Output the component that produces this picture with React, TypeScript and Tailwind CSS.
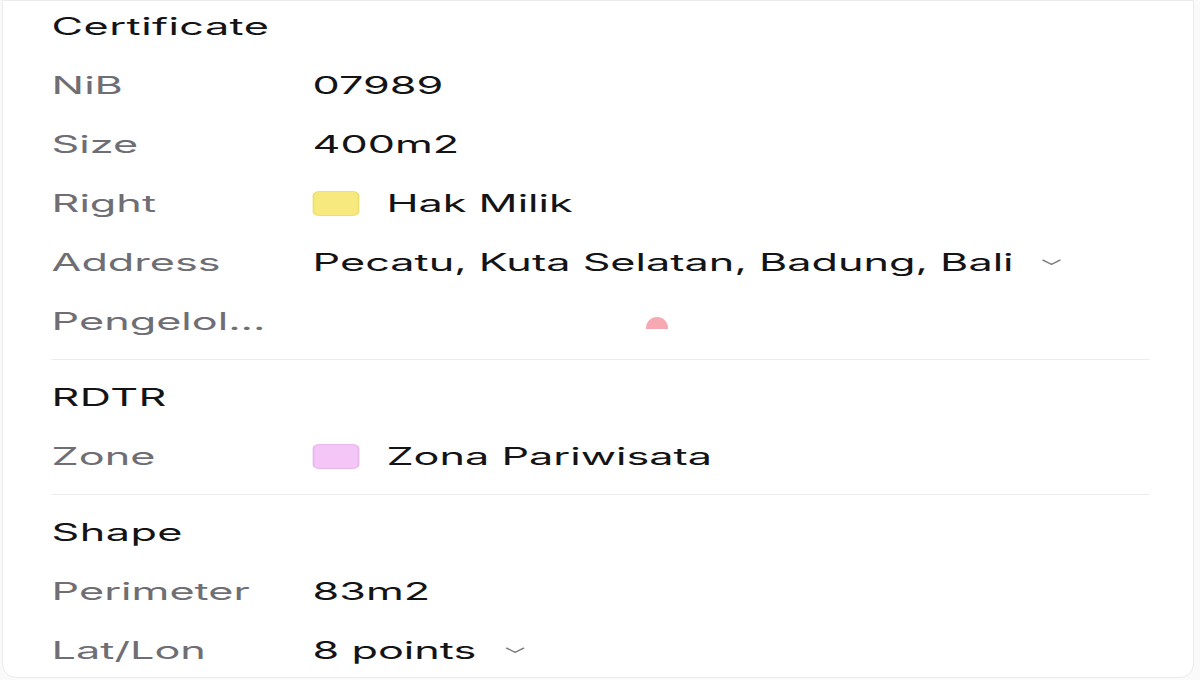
import React from 'react';

type Row = {
  label: string;
  value?: string;
  swatch?: string;
  expandable?: boolean;
};

type Section = {
  title: string;
  rows: Row[];
};

const sections: Section[] = [
  {
    title: 'Certificate',
    rows: [
      { label: 'NiB', value: '07989' },
      { label: 'Size', value: '400m2' },
      { label: 'Right', value: 'Hak Milik', swatch: 'bg-[#f7e97e] border-[#ece071]' },
      { label: 'Address', value: 'Pecatu, Kuta Selatan, Badung, Bali', expandable: true },
      { label: 'Pengelol...' },
    ],
  },
  {
    title: 'RDTR',
    rows: [{ label: 'Zone', value: 'Zona Pariwisata', swatch: 'bg-[#f3c6f7] border-[#e8b9ec]' }],
  },
  {
    title: 'Shape',
    rows: [
      { label: 'Perimeter', value: '83m2' },
      { label: 'Lat/Lon', value: '8 points', expandable: true },
    ],
  },
];

function Chevron() {
  return (
    <svg viewBox="0 0 12 7" className="ml-[16px] h-[7px] w-[11px] text-[#7a7a80]" fill="none">
      <path d="M1 1l5 4.5L11 1" stroke="currentColor" strokeWidth="1.3" strokeLinecap="round" strokeLinejoin="round" />
    </svg>
  );
}

function InfoRow({ row }: { row: Row }) {
  return (
    <div className="flex h-[59px] items-center">
      <div className="w-[145px] shrink-0 text-[#6e6e74]">{row.label}</div>
      <div className="flex items-center text-[#141416]">
        {row.swatch && <span className={`mr-[15px] h-[25px] w-[26px] rounded-[4px] border ${row.swatch}`} />}
        {row.value && <span>{row.value}</span>}
        {row.expandable && <Chevron />}
      </div>
    </div>
  );
}

export default function App() {
  return (
    <div className="h-[680px] w-[1200px] overflow-hidden bg-[#fafafa]">
      <div className="relative ml-[2px] h-[678px] w-[1192px] overflow-hidden rounded-b-[14px] border border-[#ebebeb] bg-white">
        <div
          className="-mt-[4px] w-[661px] origin-left scale-x-[1.8] pl-[27px] pr-[24px] text-[24px] leading-none"
          style={{ fontFamily: 'Inter, "Noto Sans", sans-serif' }}
        >
          {sections.map((section, i) => (
            <div key={section.title}>
              {i > 0 && <div className="my-[8px] h-px bg-[#ececee]" />}
              <div className="flex h-[59px] items-center tracking-[0.01em] text-[#141416]">{section.title}</div>
              {section.rows.map((row) => (
                <InfoRow key={row.label} row={row} />
              ))}
            </div>
          ))}
        </div>
        <span className="absolute left-[643px] top-[316px] h-[12px] w-[22px] rounded-t-full bg-[#f6a9b3]" />
      </div>
    </div>
  );
}
